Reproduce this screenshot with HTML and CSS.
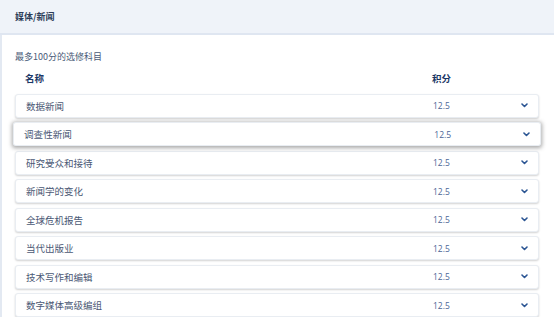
FILE: index.html
```html
<!DOCTYPE html>
<html lang="zh">
<head>
<meta charset="utf-8">
<link rel="stylesheet" href="styles.css">
</head>
<body>
<div class="panel">
  <div class="header">媒体/新闻</div>
  <div class="content">
    <div class="subtitle">最多100分的选修科目</div>
    <div class="cols">
      <span class="col-name">名称</span>
      <span class="col-num">积分</span>
    </div>
    <div class="list">
      <div class="row"><span class="name">数据新闻</span><span class="num">12.5</span><svg class="chev" viewBox="0 0 7 5"><path d="M1 1 L3.5 3.5 L6 1"/></svg></div>
      <div class="row hover"><span class="name">调查性新闻</span><span class="num">12.5</span><svg class="chev" viewBox="0 0 7 5"><path d="M1 1 L3.5 3.5 L6 1"/></svg></div>
      <div class="row"><span class="name">研究受众和接待</span><span class="num">12.5</span><svg class="chev" viewBox="0 0 7 5"><path d="M1 1 L3.5 3.5 L6 1"/></svg></div>
      <div class="row"><span class="name">新闻学的变化</span><span class="num">12.5</span><svg class="chev" viewBox="0 0 7 5"><path d="M1 1 L3.5 3.5 L6 1"/></svg></div>
      <div class="row"><span class="name">全球危机报告</span><span class="num">12.5</span><svg class="chev" viewBox="0 0 7 5"><path d="M1 1 L3.5 3.5 L6 1"/></svg></div>
      <div class="row"><span class="name">当代出版业</span><span class="num">12.5</span><svg class="chev" viewBox="0 0 7 5"><path d="M1 1 L3.5 3.5 L6 1"/></svg></div>
      <div class="row"><span class="name">技术写作和编辑</span><span class="num">12.5</span><svg class="chev" viewBox="0 0 7 5"><path d="M1 1 L3.5 3.5 L6 1"/></svg></div>
      <div class="row"><span class="name">数字媒体高级编组</span><span class="num">12.5</span><svg class="chev" viewBox="0 0 7 5"><path d="M1 1 L3.5 3.5 L6 1"/></svg></div>
    </div>
  </div>
</div>
</body>
</html>
```
FILE: styles.css
```css
html, body {
  margin: 0;
  padding: 0;
  background: #ffffff;
}
body {
  font-family: "Noto Sans CJK SC", "Noto Sans", sans-serif;
  width: 554px;
  height: 317px;
  overflow: hidden;
}
.panel {
  border-left: 2px solid #e3e9f2;
  min-height: 317px;
  box-sizing: border-box;
}
.header {
  height: 33px;
  background: #eff3f9;
  border-bottom: 2px solid #dfe6f1;
  display: flex;
  align-items: center;
  margin-left: -2px;
  padding-left: 15px;
  font-size: 9px;
  font-weight: 700;
  color: #2c3c58;
}
.content {
  padding: 15px 15px 0 13px;
}
.subtitle {
  font-size: 9px;
  line-height: 14px;
  color: #4a5b78;
}
.cols {
  display: flex;
  margin-top: 7px;
  padding: 0 10px;
  font-size: 9.5px;
  line-height: 14px;
  font-weight: 700;
  color: #1b3766;
}
.col-name {
  flex: 1;
}
.col-num {
  width: 97px;
}
.list {
  margin-top: 8.5px;
  display: flex;
  flex-direction: column;
  gap: 4.5px;
}
.row {
  height: 24px;
  box-sizing: border-box;
  display: flex;
  align-items: center;
  padding: 0 10px 0 10px;
  background: #fff;
  border: 1px solid #e9edf2;
  border-radius: 3px;
  box-shadow: 0 1px 2px rgba(0, 0, 0, 0.18);
  font-size: 9.5px;
  color: #4a5874;
}
.row.hover {
  transform: scale(1.008);
  box-shadow: 0 1px 4px rgba(0, 0, 0, 0.35);
}
.name {
  flex: 1;
}
.num {
  width: 88px;
  font-family: "Open Sans", "Liberation Sans", sans-serif;
  font-size: 8.5px;
  color: #4c6696;
}
.chev {
  width: 7px;
  height: 5px;
  fill: none;
  stroke: #2b5593;
  stroke-width: 1.6;
  stroke-linecap: round;
  stroke-linejoin: round;
}
```
